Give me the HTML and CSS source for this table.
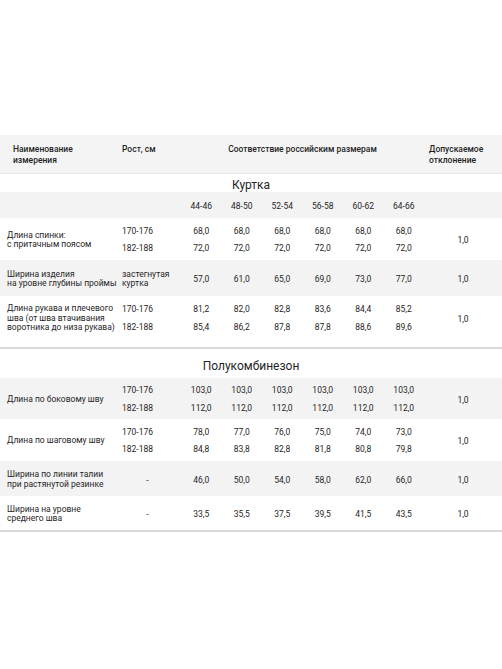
FILE: index.html
```html
<!DOCTYPE html>
<html lang="ru">
<head>
    <meta charset="UTF-8">
    <meta name="viewport" content="width=device-width, initial-scale=1.0">
    <title>Таблица размеров</title>
    <link rel="stylesheet" href="styles.css">
</head>
<body>
    <div class="sheet">
        <table class="size-table">
            <colgroup>
                <col class="c-name">
                <col class="c-growth">
                <col class="c-size" span="6">
                <col class="c-tol">
            </colgroup>
            <thead>
                <tr class="head">
                    <th>Наименование<br>измерения</th>
                    <th class="growth">Рост, см</th>
                    <th colspan="6" class="center">Соответствие российским размерам</th>
                    <th class="tol">Допускаемое<br>отклонение</th>
                </tr>
            </thead>
            <tbody>
                <tr class="section first"><td colspan="9">Куртка</td></tr>
                <tr class="sizes shaded">
                    <td></td><td></td>
                    <td>44-46</td><td>48-50</td><td>52-54</td><td>56-58</td><td>60-62</td><td>64-66</td>
                    <td></td>
                </tr>
                <tr class="r-42">
                    <td class="name">Длина спинки:<br>с притачным поясом</td>
                    <td class="growth"><div>170-176</div><div>182-188</div></td>
                    <td><div>68,0</div><div>72,0</div></td>
                    <td><div>68,0</div><div>72,0</div></td>
                    <td><div>68,0</div><div>72,0</div></td>
                    <td><div>68,0</div><div>72,0</div></td>
                    <td><div>68,0</div><div>72,0</div></td>
                    <td><div>68,0</div><div>72,0</div></td>
                    <td>1,0</td>
                </tr>
                <tr class="r-36 shaded">
                    <td class="name">Ширина изделия<br>на уровне глубины проймы</td>
                    <td class="growth note">застегнутая<br>куртка</td>
                    <td>57,0</td><td>61,0</td><td>65,0</td><td>69,0</td><td>73,0</td><td>77,0</td>
                    <td>1,0</td>
                </tr>
                <tr class="r-last">
                    <td class="name">Длина рукава и плечевого<br>шва (от шва втачивания<br>воротника до низа рукава)</td>
                    <td class="growth"><div>170-176</div><div>182-188</div></td>
                    <td><div>81,2</div><div>85,4</div></td>
                    <td><div>82,0</div><div>86,2</div></td>
                    <td><div>82,8</div><div>87,8</div></td>
                    <td><div>83,6</div><div>87,8</div></td>
                    <td><div>84,4</div><div>88,6</div></td>
                    <td><div>85,2</div><div>89,6</div></td>
                    <td>1,0</td>
                </tr>
            </tbody>
        </table>

        <table class="size-table">
            <colgroup>
                <col class="c-name">
                <col class="c-growth">
                <col class="c-size" span="6">
                <col class="c-tol">
            </colgroup>
            <tbody>
                <tr class="section second"><td colspan="9">Полукомбинезон</td></tr>
                <tr class="r-41 shaded">
                    <td class="name">Длина по боковому шву</td>
                    <td class="growth"><div>170-176</div><div>182-188</div></td>
                    <td><div>103,0</div><div>112,0</div></td>
                    <td><div>103,0</div><div>112,0</div></td>
                    <td><div>103,0</div><div>112,0</div></td>
                    <td><div>103,0</div><div>112,0</div></td>
                    <td><div>103,0</div><div>112,0</div></td>
                    <td><div>103,0</div><div>112,0</div></td>
                    <td>1,0</td>
                </tr>
                <tr class="r-42">
                    <td class="name">Длина по шаговому шву</td>
                    <td class="growth"><div>170-176</div><div>182-188</div></td>
                    <td><div>78,0</div><div>84,8</div></td>
                    <td><div>77,0</div><div>83,8</div></td>
                    <td><div>76,0</div><div>82,8</div></td>
                    <td><div>75,0</div><div>81,8</div></td>
                    <td><div>74,0</div><div>80,8</div></td>
                    <td><div>73,0</div><div>79,8</div></td>
                    <td>1,0</td>
                </tr>
                <tr class="r-35 shaded">
                    <td class="name">Ширина по линии талии<br>при растянутой резинке</td>
                    <td class="dash">-</td>
                    <td>46,0</td><td>50,0</td><td>54,0</td><td>58,0</td><td>62,0</td><td>66,0</td>
                    <td>1,0</td>
                </tr>
                <tr class="r-35 end">
                    <td class="name">Ширина на уровне<br>среднего шва</td>
                    <td class="dash">-</td>
                    <td>33,5</td><td>35,5</td><td>37,5</td><td>39,5</td><td>41,5</td><td>43,5</td>
                    <td>1,0</td>
                </tr>
            </tbody>
        </table>
    </div>
</body>
</html>
```

FILE: styles.css
```css
body {
    margin: 0;
    background-color: #ffffff;
    color: #262626;
    font-family: Roboto, "Noto Sans", sans-serif;
}
.sheet {
    padding-top: 135px;
}
.size-table {
    width: 502px;
    border-collapse: collapse;
    table-layout: fixed;
    font-size: 8.5px;
}
.c-name { width: 114px; }
.c-growth { width: 67px; }
.c-size { width: 40.5px; }
.c-tol { width: 78px; }

.size-table th,
.size-table td {
    box-sizing: border-box;
    padding: 0;
    text-align: center;
    vertical-align: middle;
    white-space: nowrap;
}

/* header */
.head th {
    height: 38px;
    padding-top: 9px;
    vertical-align: top;
    text-align: left;
    font-weight: 500;
    line-height: 11px;
    color: #1f1f1f;
    background-color: #f4f4f4;
    border-bottom: 1px solid #e8e8e8;
}
.head th:first-child { padding-left: 13px; }
.head th.center { text-align: center; }
.head th.growth { padding-left: 8px; }
.head th.tol { padding-left: 5px; }

/* section titles */
.section td {
    font-size: 12px;
    line-height: 14px;
    color: #1f1f1f;
}
.section.first td { height: 18px; padding-top: 4px; }
.section.second td {
    height: 29px;
    vertical-align: bottom;
    padding-bottom: 5px;
}

.shaded td { background-color: #f3f3f3; }
.sizes td { height: 26px; padding-top: 2px; }

.size-table td div { line-height: 17.5px; }

.size-table td.name {
    text-align: left;
    padding-left: 7px;
    line-height: 9.5px;
}
.size-table td.growth {
    text-align: left;
    padding-left: 8px;
}
.size-table td.note { line-height: 9.5px; }

.r-35 td,
.r-36 td,
.r-41 td,
.r-42 td { padding-top: 3px; }
.r-35 td { height: 35px; }
.r-36 td { height: 36px; }
.r-41 td { height: 41px; }
.r-42 td { height: 42px; }
.r-last td {
    height: 52px;
    padding-top: 2px;
    padding-bottom: 7px;
    border-bottom: 2px solid #dadada;
}
.end td { border-bottom: 2px solid #dadada; }
```
